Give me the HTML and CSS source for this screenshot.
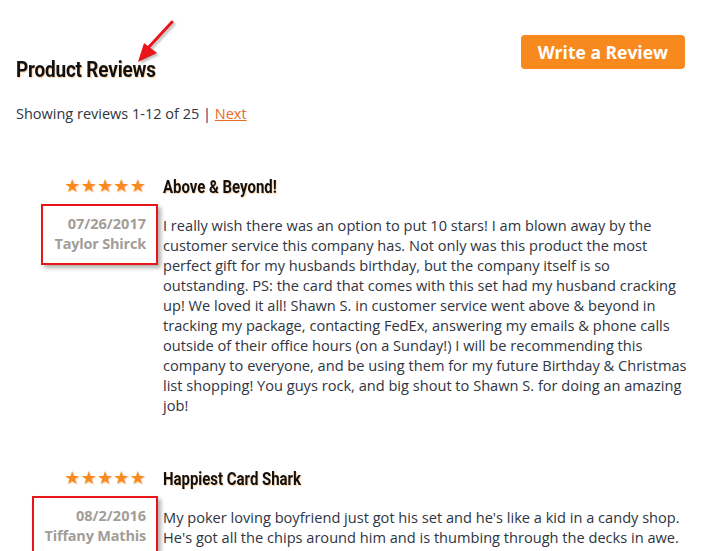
FILE: index.html
```
<!DOCTYPE html>
<html lang="en">
<head>
    <meta charset="UTF-8">
    <meta name="viewport" content="width=device-width, initial-scale=1.0">
    <title>Product Reviews</title>
    <link rel="stylesheet" href="styles.css">
</head>
<body>
    <div class="page">
        <svg class="arrow" width="60" height="60" viewBox="0 0 60 60">
            <line x1="42" y1="7" x2="18" y2="33" stroke="#e8151b" stroke-width="3" stroke-linecap="round"></line>
            <polygon points="8,47 14,28 27,38" fill="#e8151b"></polygon>
        </svg>

        <div class="header">
            <h1><span>Product Reviews</span></h1>
            <a href="#" class="write-button">Write a Review</a>
        </div>

        <p class="summary">Showing reviews 1-12 of 25 <span class="sep">|</span> <a href="#">Next</a></p>

        <div class="review">
            <div class="review-side">
                <div class="stars">★★★★★</div>
                <div class="meta">
                    <div class="date">07/26/2017</div>
                    <div class="author">Taylor Shirck</div>
                </div>
            </div>
            <div class="review-body">
                <h2><span>Above &amp; Beyond!</span></h2>
                <p>I really wish there was an option to put 10 stars! I am blown away by the customer service this company has. Not only was this product the most perfect gift for my husbands birthday, but the company itself is so outstanding. PS: the card that comes with this set had my husband cracking up! We loved it all! Shawn S. in customer service went above &amp; beyond in tracking my package, contacting FedEx, answering my emails &amp; phone calls outside of their office hours (on a Sunday!) I will be recommending this company to everyone, and be using them for my future Birthday &amp; Christmas list shopping! You guys rock, and big shout to Shawn S. for doing an amazing job!</p>
            </div>
        </div>

        <div class="review">
            <div class="review-side">
                <div class="stars">★★★★★</div>
                <div class="meta">
                    <div class="date">08/2/2016</div>
                    <div class="author">Tiffany Mathis</div>
                </div>
            </div>
            <div class="review-body">
                <h2><span>Happiest Card Shark</span></h2>
                <p>My poker loving boyfriend just got his set and he's like a kid in a candy shop. He's got all the chips around him and is thumbing through the decks in awe.</p>
            </div>
        </div>
    </div>
</body>
</html>
```
FILE: styles.css
```
:root {
    --orange: #f7891f;
    --link-color: #ea6a2a;
    --text-color: #2f3542;
    --muted: #a39d97;
    --note-red: #e8151b;
}

* {
    margin: 0;
    padding: 0;
    box-sizing: border-box;
}

body {
    background: #fff;
    color: var(--text-color);
    font-family: "Open Sans", "Noto Sans", sans-serif;
    font-size: 14px;
}

.page {
    position: relative;
    padding: 35px 39px 0 16px;
}

.arrow {
    position: absolute;
    left: 130px;
    top: 15px;
    filter: drop-shadow(2px 2px 1px rgba(0, 0, 0, 0.25));
}

.header {
    display: flex;
    justify-content: space-between;
    align-items: flex-start;
}

/* condensed headings: no narrow face installed, so squeeze a regular one */
h1, h2 {
    font-family: "Roboto", sans-serif;
    font-weight: 700;
    color: #111;
    white-space: nowrap;
}

h1 span, h2 span {
    display: inline-block;
    transform: scaleX(0.83);
    transform-origin: left center;
    text-shadow: 1px 1px 1px rgba(247, 137, 31, 0.4);
}

h1 span {
    transform: scaleX(0.86);
}

h1 {
    margin-top: 22px;
    font-size: 22px;
    letter-spacing: -0.2px;
}

.write-button {
    display: block;
    background-color: var(--orange);
    color: #fff;
    font-family: "Open Sans", sans-serif;
    font-weight: 700;
    font-size: 17.5px;
    line-height: 24px;
    text-decoration: none;
    padding: 5px 17px;
    border-radius: 4px;
}

.summary {
    margin-top: 22px;
    font-size: 14.5px;
}

.summary .sep {
    color: #1e2a6a;
}

.summary a {
    color: var(--link-color);
}

.review {
    display: grid;
    grid-template-columns: 130px 528px;
    column-gap: 17px;
    margin-top: 53px;
}

.review-side {
    display: flex;
    flex-direction: column;
    align-items: flex-end;
}

.stars {
    color: var(--orange);
    font-family: "DejaVu Sans", sans-serif;
    font-size: 18px;
    letter-spacing: 0.2px;
    line-height: 20px;
    text-shadow: 1px 1px 1px rgba(247, 137, 31, 0.35);
}

.meta {
    margin-top: 8px;
    margin-right: -12px;
    padding: 8px 10px 9px 11px;
    border: 2px solid var(--note-red);
    box-shadow: 3px 3px 4px rgba(0, 0, 0, 0.3);
    text-align: right;
    color: var(--muted);
    font-weight: 700;
    font-size: 14.5px;
    line-height: 20px;
}

.author {
    letter-spacing: -0.2px;
}

h2 {
    font-size: 18px;
    line-height: 22px;
}

.review-body p {
    margin-top: 17px;
    font-size: 14.6px;
    line-height: 20px;
}
```
